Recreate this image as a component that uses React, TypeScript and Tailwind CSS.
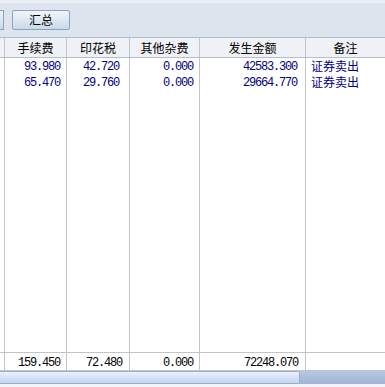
import React from "react";

const cols = "grid grid-cols-[5px_62px_63px_70px_106px_79px]";
const cjk = { fontFamily: '"SimSun","Noto Sans CJK SC",sans-serif' };
const mono = { fontFamily: '"Liberation Mono",monospace' };

const rows = [
  ["93.980", "42.720", "0.000", "42583.300", "证券卖出"],
  ["65.470", "29.760", "0.000", "29664.770", "证券卖出"],
];

function Cell({ children, className = "" }: { children?: React.ReactNode; className?: string }) {
  return <div className={`border-r border-[#c4c4c4] overflow-hidden whitespace-nowrap ${className}`}>{children}</div>;
}

export default function App() {
  return (
    <div className="w-[385px] h-[387px] flex flex-col overflow-hidden bg-white text-black">
      {/* toolbar */}
      <div className="h-[37px] shrink-0 bg-[#dce5ee] border-t-[3px] border-[#eaeff4] flex items-start pt-[7px] gap-[8px]">
        <div className="w-[4px] h-[20px] border border-l-0 border-[#8fa3b8] bg-gradient-to-b from-[#eef4fa] to-[#c9d9e9]" />
        <div
          className="w-[58px] h-[20px] border border-[#8fa3b8] rounded-[2px] bg-gradient-to-b from-[#f2f6fb] to-[#c9d9e9] flex items-center justify-center text-[12px] leading-none"
          style={cjk}
        >
          汇总
        </div>
      </div>
      {/* header */}
      <div className={`${cols} h-[21px] shrink-0 bg-[#eef2f6] border-y border-[#b4bec8] text-[12px]`} style={cjk}>
        <Cell />
        {["手续费", "印花税", "其他杂费", "发生金额", "备注"].map((h, i) => (
          <Cell key={h} className={`flex items-center justify-center ${i === 4 ? "border-r-0" : ""}`}>{h}</Cell>
        ))}
      </div>
      {/* data */}
      {rows.map((r, i) => (
        <div key={i} className={`${cols} h-[16px] shrink-0 text-[12px] leading-[16px] text-[#000080]`}>
          <Cell />
          <Cell className="text-right pr-[6px] tracking-[-1.2px]"><span style={mono}>{r[0]}</span></Cell>
          <Cell className="text-right pr-[10px] tracking-[-1.2px]"><span style={mono}>{r[1]}</span></Cell>
          <Cell className="text-right pr-[6px] tracking-[-1.2px]"><span style={mono}>{r[2]}</span></Cell>
          <Cell className="text-right pr-[8px] tracking-[-1.2px]"><span style={mono}>{r[3]}</span></Cell>
          <Cell className="pl-[5px] text-[12px] border-r-0"><span style={cjk}>{r[4]}</span></Cell>
        </div>
      ))}
      <div className={`${cols} flex-1`}>
        <Cell /><Cell /><Cell /><Cell /><Cell /><Cell className="border-r-0" />
      </div>
      {/* totals */}
      <div className={`${cols} h-[19px] shrink-0 border-y border-[#c4c4c4] text-[12px] leading-[17px]`}>
        <Cell />
        <Cell className="text-right pr-[6px] tracking-[-1.2px]"><span style={mono}>159.450</span></Cell>
        <Cell className="text-right pr-[7px] tracking-[-1.2px]"><span style={mono}>72.480</span></Cell>
        <Cell className="text-right pr-[6px] tracking-[-1.2px]"><span style={mono}>0.000</span></Cell>
        <Cell className="text-right pr-[7px] tracking-[-1.2px]"><span style={mono}>72248.070</span></Cell>
        <Cell className="border-r-0" />
      </div>
      {/* scrollbar */}
      <div className="h-[16px] shrink-0 flex flex-col bg-[#f2f5f8]">
        <div className="h-[13px] flex bg-gradient-to-b from-[#b6c8e2] to-[#9fb5d5]">
          <div className="w-[300px] h-full border border-l-0 border-[#9ab0cf] rounded-r-[2px] bg-gradient-to-b from-[#e9f0fa] to-[#c3d5ee]" />
        </div>
      </div>
    </div>
  );
}
